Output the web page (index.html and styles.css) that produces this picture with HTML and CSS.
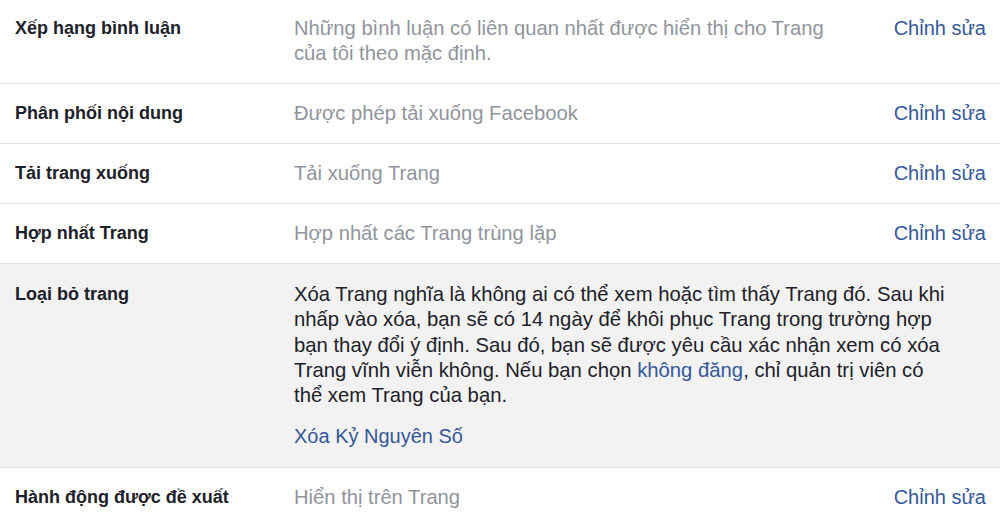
FILE: index.html
```html
<!DOCTYPE html>
<html lang="vi">
<head>
<meta charset="utf-8">
<link rel="stylesheet" href="styles.css">
</head>
<body>
<div class="settings">
  <div class="row first">
    <div class="label">Xếp hạng bình luận</div>
    <div class="desc">Những bình luận có liên quan nhất được hiển thị cho Trang<br>của tôi theo mặc định.</div>
    <a class="edit">Chỉnh sửa</a>
  </div>
  <div class="row">
    <div class="label">Phân phối nội dung</div>
    <div class="desc">Được phép tải xuống Facebook</div>
    <a class="edit">Chỉnh sửa</a>
  </div>
  <div class="row">
    <div class="label">Tải trang xuống</div>
    <div class="desc">Tải xuống Trang</div>
    <a class="edit">Chỉnh sửa</a>
  </div>
  <div class="row">
    <div class="label">Hợp nhất Trang</div>
    <div class="desc">Hợp nhất các Trang trùng lặp</div>
    <a class="edit">Chỉnh sửa</a>
  </div>
  <div class="row open">
    <div class="label">Loại bỏ trang</div>
    <div class="body">
      <p class="para">Xóa Trang nghĩa là không ai có thể xem hoặc tìm thấy Trang đó. Sau khi<br>nhấp vào xóa, bạn sẽ có 14 ngày để khôi phục Trang trong trường hợp<br>bạn thay đổi ý định. Sau đó, bạn sẽ được yêu cầu xác nhận xem có xóa<br>Trang vĩnh viễn không. Nếu bạn chọn <a class="inline">không đăng</a>, chỉ quản trị viên có<br>thể xem Trang của bạn.</p>
      <a class="action">Xóa Kỷ Nguyên Số</a>
    </div>
  </div>
  <div class="row">
    <div class="label">Hành động được đề xuất</div>
    <div class="desc">Hiển thị trên Trang</div>
    <a class="edit">Chỉnh sửa</a>
  </div>
</div>
</body>
</html>
```

FILE: styles.css
```css
html, body {
  margin: 0;
  padding: 0;
  background: #ffffff;
}
body {
  font-family: "Liberation Sans", Arial, sans-serif;
  width: 1000px;
  height: 522px;
  overflow: hidden;
}
.settings {
  display: flex;
  flex-direction: column;
}
.row {
  display: grid;
  grid-template-columns: 279px 1fr auto;
  align-items: start;
  padding: 17px 14px 0 15px;
  border-bottom: 1px solid #e2e2e2;
  line-height: 25px;
  height: 60px;
  box-sizing: border-box;
}
.row.first {
  padding-top: 16px;
  height: 84px;
}
.row.open {
  background: #f2f2f2;
  height: 204px;
  padding-top: 18px;
}
.label {
  font-size: 18px;
  font-weight: bold;
  color: #1d2129;
}
.desc {
  font-size: 20.2px;
  color: #90949c;
  white-space: nowrap;
}
.edit {
  font-size: 20px;
  color: #365899;
  cursor: pointer;
}
.body {
  grid-column: 2 / 4;
  display: flex;
  flex-direction: column;
  align-items: flex-start;
}
.para {
  margin: 0;
  font-size: 20.3px;
  line-height: 25.3px;
  color: #1d2129;
  white-space: nowrap;
}
.inline {
  color: #365899;
}
.action {
  margin-top: 16px;
  font-size: 20px;
  color: #365899;
}
```
